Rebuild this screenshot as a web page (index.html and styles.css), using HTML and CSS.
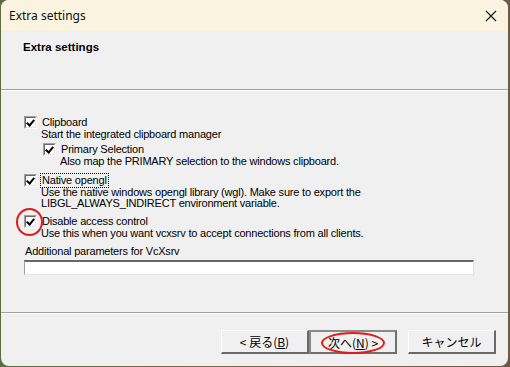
FILE: index.html
```html
<!DOCTYPE html>
<html>
<head>
<meta charset="utf-8">
<link rel="stylesheet" href="styles.css">
</head>
<body>
<div class="window">
  <div class="titlebar">
    <span class="title">Extra settings</span>
    <svg class="close" width="12" height="12" viewBox="0 0 12 12"><path d="M1 1L11 11M11 1L1 11" stroke="#1a1a1a" stroke-width="1.2"/></svg>
  </div>
  <div class="header">
    <div class="heading">Extra settings</div>
  </div>
  <div class="content">
    <div class="row"><span class="cb"></span><span class="label">Clipboard</span></div>
    <div class="desc">Start the integrated clipboard manager</div>
    <div class="row sub r2"><span class="cb"></span><span class="label">Primary Selection</span></div>
    <div class="desc sub">Also map the PRIMARY selection to the windows clipboard.</div>
    <div class="row r3"><span class="cb"></span><span class="label focus">Native opengl</span></div>
    <div class="desc two">Use the native windows opengl library (wgl). Make sure to export the<br>LIBGL_ALWAYS_INDIRECT environment variable.</div>
    <div class="row r4"><span class="cb"><span class="ring"></span></span><span class="label">Disable access control</span></div>
    <div class="desc">Use this when you want vcxsrv to accept connections from all clients.</div>
    <div class="param">Additional parameters for VcXsrv</div>
    <div class="input"></div>
  </div>
  <div class="footer">
    <button class="btn">&lt;&nbsp;戻る(<u>B</u>)</button>
    <button class="btn default"><span class="mark">次へ(<u>N</u>)&nbsp;&gt;</span></button>
    <button class="btn cancel">キャンセル</button>
  </div>
</div>
</body>
</html>
```
FILE: styles.css
```css
* { box-sizing: border-box; }
html, body { margin: 0; padding: 0; }
body {
  width: 510px;
  height: 367px;
  background: linear-gradient(90deg, #5d6b3f 0%, #7a6a4c 50%, #6e5a46 100%);
  overflow: hidden;
  padding: 0 2px 0 1px;
}
.window {
  width: 507px;
  height: 366px;
  background: #f0f0f0;
  border-radius: 8px;
  overflow: hidden;
  display: flex;
  flex-direction: column;
  font-family: "Liberation Sans", sans-serif;
  font-size: 11px;
  letter-spacing: -0.2px;
  color: #000;
}
.titlebar {
  height: 31px;
  background: #f9f3df;
  display: flex;
  align-items: center;
  justify-content: space-between;
  padding: 0 8px 0 8px;
  letter-spacing: 0;
}
.title {
  font-family: "Noto Sans", sans-serif;
  font-size: 12px;
  color: #111;
}
.close { margin-right: 3px; }
.header {
  height: 59px;
  border-bottom: 1px solid #a0a0a0;
  padding: 10px 0 0 22px;
}
.heading {
  font-family: "Liberation Sans", sans-serif;
  font-weight: bold;
  font-size: 11.5px;
  letter-spacing: 0;
}
.content {
  flex: 1;
  border-top: 1px solid #fff;
  padding: 25px 0 0 23px;
  border-bottom: 1px solid #a0a0a0;
}
.row {
  display: flex;
  align-items: center;
  height: 13px;
}
.row.sub { margin-left: 19px; }
.r2 { margin-top: 3px; }
.r3 { margin-top: 7px; }
.r4 { margin-top: 6px; }
.cb {
  width: 13px;
  height: 13px;
  border-top: 1px solid #a0a0a0;
  border-left: 1px solid #a0a0a0;
  border-right: 1px solid #fff;
  border-bottom: 1px solid #fff;
  position: relative;
  margin-right: 4px;
  flex: none;
}
.cb::before {
  content: "";
  position: absolute;
  inset: 0;
  border-top: 1px solid #696969;
  border-left: 1px solid #696969;
  border-right: 1px solid #e3e3e3;
  border-bottom: 1px solid #e3e3e3;
  background: #fff;
}
.cb::after {
  content: "";
  position: absolute;
  left: 3px;
  top: 1px;
  width: 3px;
  height: 6px;
  border-right: 2px solid #000;
  border-bottom: 2px solid #000;
  transform: rotate(40deg);
}
.ring {
  position: absolute;
  left: -9px;
  top: -8px;
  width: 27px;
  height: 28px;
  border: 2px solid #e11b1b;
  border-radius: 50%;
}
.label { line-height: 13px; padding: 0 1px; }
.focus { outline: 1px dotted #000; }
.desc { margin-left: 17px; line-height: 12px; margin-top: -1px; }
.desc.sub { margin-left: 36px; }
.desc.two { line-height: 11px; margin-top: 0; }
.param { margin-top: 6px; margin-left: 1px; line-height: 12px; }
.input {
  margin-top: 3px;
  width: 450px;
  height: 15px;
  background: #fff;
  border-top: 2px solid #696969;
  border-left: 1px solid #a0a0a0;
  border-right: 1px solid #e3e3e3;
  border-bottom: 1px solid #e3e3e3;
}
.footer {
  height: 53px;
  border-top: 1px solid #fff;
  display: flex;
  align-items: flex-start;
  padding: 16px 0 0 220px;
}
.btn {
  width: 88px;
  height: 24px;
  font-family: "Noto Sans CJK JP", sans-serif;
  font-size: 12px;
  letter-spacing: 0;
  background: #f0f0f0;
  border-top: 1px solid #fff;
  border-left: 1px solid #fff;
  border-right: 2px solid #696969;
  border-bottom: 2px solid #696969;
  padding: 0;
  color: #000;
}
.default {
  width: 88px;
  border: 2px solid #6f6f6f;
  border-top-color: #8a8a8a;
  border-left-color: #8a8a8a;
}
.cancel { margin-left: 11px; }
.mark {
  display: inline-block;
  border: 2px solid #e11b1b;
  border-radius: 50%;
  padding: 1px 5px;
  line-height: 16px;
}
```
